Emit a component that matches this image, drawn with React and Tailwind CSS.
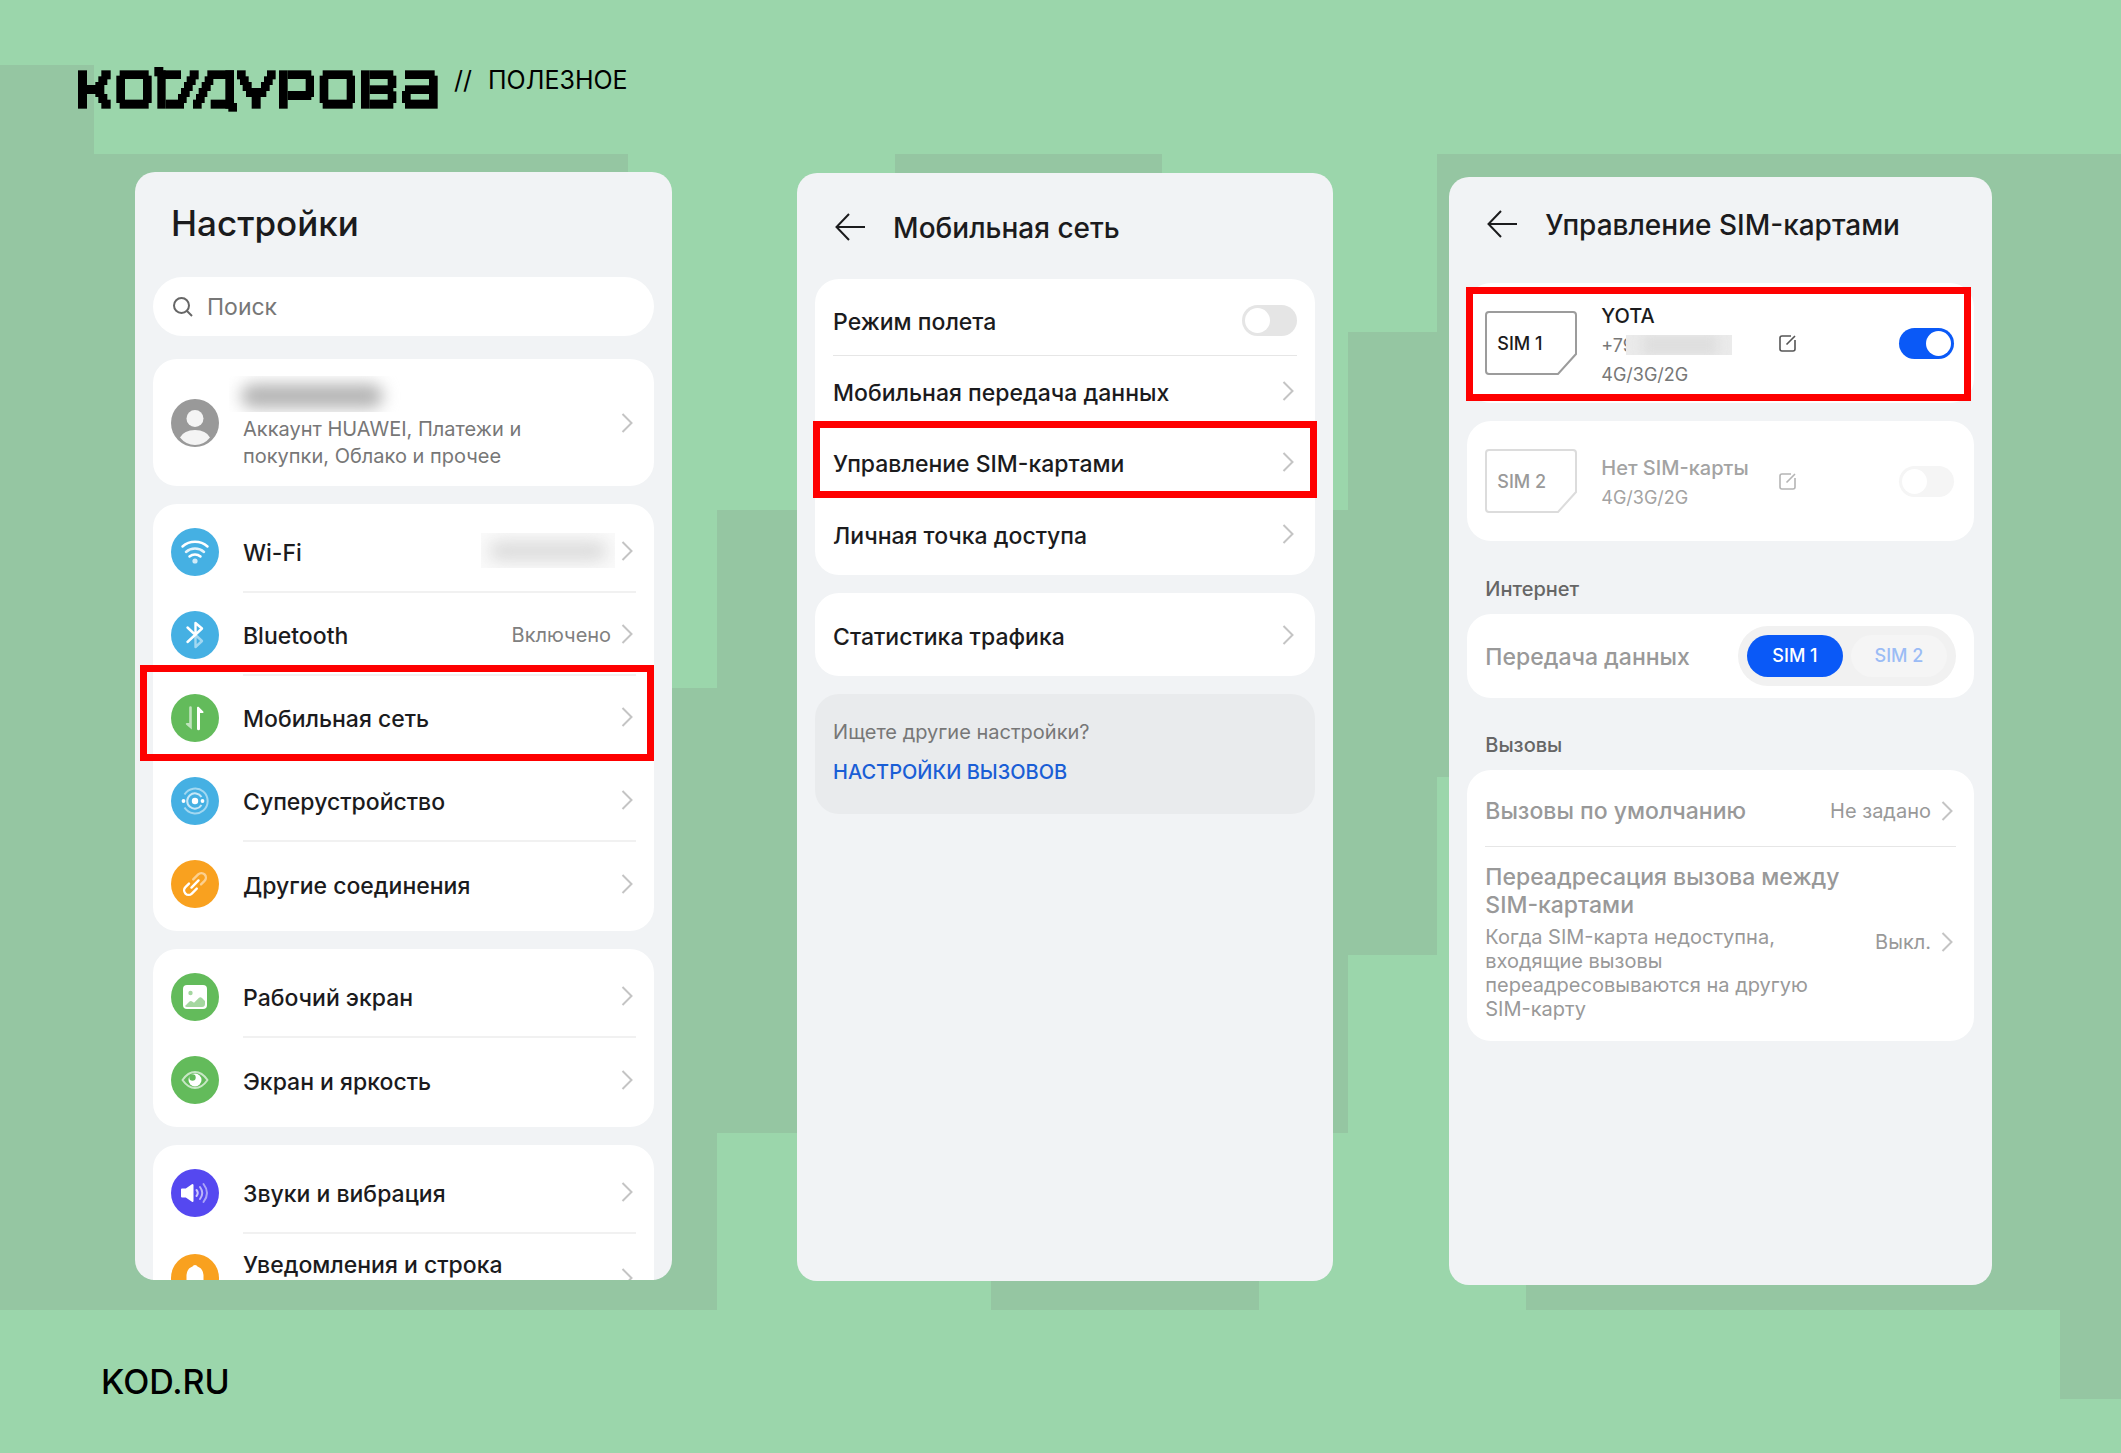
import { useState } from "react";

// Wordmark blocks: x1, y1, x2, y2
const LOGO_BLOCKS = [
    [12, 32, 39, 147], [39, 76, 73, 103], [82, 32, 110, 59], [73, 50, 100, 76], [64, 67, 91, 112], [73, 103, 100, 130], [82, 120, 110, 147],
    [137, 32, 224, 58], [127, 48, 153, 130], [207, 48, 233, 130], [137, 120, 224, 147],
    [241, 22, 268, 50], [250, 32, 275, 147], [268, 32, 321, 58], [275, 120, 330, 147], [347, 32, 374, 59], [338, 50, 365, 76], [330, 67, 356, 94], [321, 85, 347, 112], [312, 103, 338, 130],
    [357, 120, 383, 147], [366, 103, 392, 130], [374, 85, 400, 112], [383, 67, 410, 94], [392, 50, 418, 76], [400, 32, 480, 58], [454, 32, 480, 147], [410, 120, 480, 147], [463, 130, 489, 156],
    [489, 32, 515, 59], [498, 50, 524, 76], [506, 67, 533, 94], [516, 85, 577, 112], [579, 32, 605, 59], [570, 50, 596, 76], [561, 67, 587, 94], [533, 112, 560, 147],
    [615, 32, 641, 147], [641, 32, 712, 58], [695, 48, 720, 112], [641, 94, 712, 121],
    [746, 32, 836, 58], [737, 48, 763, 130], [818, 48, 843, 130], [746, 120, 836, 147],
    [861, 32, 887, 147], [887, 32, 958, 58], [941, 48, 967, 85], [887, 77, 958, 103], [941, 95, 967, 130], [887, 120, 958, 147],
    [993, 32, 1082, 58], [1065, 48, 1091, 147], [993, 77, 1065, 103], [984, 94, 1010, 130], [993, 120, 1065, 147],
];

function Logo() {
    return (
        <svg role="img" aria-label="Код Дурова" viewBox="12 22 1080 135" className="h-[45px] w-[360px]">
            {LOGO_BLOCKS.map(([x1, y1, x2, y2], i) => (
                <rect key={i} x={x1} y={y1} width={x2 - x1} height={y2 - y1} />
            ))}
        </svg>
    );
}

function Backdrop() {
    return (
        <svg
            aria-hidden="true"
            viewBox="0 0 2121 1453"
            preserveAspectRatio="none"
            shapeRendering="crispEdges"
            className="absolute inset-0 -z-10 h-full w-full"
            fill="#95c6a2"
        >
            <path d="M0 65H94V154H628V688H717V510H895V1133H717V1310H0Z" />
            <path d="M895 154H1162V510H1348V332H1437V154H2121V1399H2060V1310H1526V777H1437V955H1348V1133H1259V1310H991V1133H895Z" />
        </svg>
    );
}

const ICONS = {
    wifi: {
        color: "#45b0e3",
        art: (
            <g stroke="#fff" strokeWidth="2.5" strokeLinecap="round">
                <path d="M11.5 18.5a19 19 0 0 1 25 0" />
                <path d="M15 24a13.500 13.500 0 0 1 18 0" opacity=".85" />
                <path d="M18.500 28.500a8.500 8.500 0 0 1 11 0" />
                <circle cx="24" cy="33" r="2.600" fill="#fff" stroke="none" opacity=".75" />
            </g>
        ),
    },
    bluetooth: {
        color: "#45b0e3",
        art: (
            <g stroke="#fff" strokeWidth="2.400" strokeLinejoin="round" strokeLinecap="round">
                <path d="M24.500 25v11l6.500-6L24.500 24" opacity=".5" />
                <path d="M16.500 16.500l8 7.500M24.500 24V12l6.500 5.500L16.500 31" />
            </g>
        ),
    },
    mobile: {
        color: "#63bb5b",
        art: (
            <g fill="#fff">
                <path d="M18.200 13.500a1.300 1.300 0 0 1 2.600 0V35.500L15 30.500q-.8-1.500.8-1.500h2.400Z" opacity=".6" />
                <path d="M26 34.700a1.500 1.500 0 0 0 3 0V19h2.800q1.400-.2.500-1.500L27.500 12.800q-1.500-.6-1.500 1Z" />
            </g>
        ),
    },
    device: {
        color: "#45b0e3",
        art: (
            <g stroke="#fff" strokeWidth="2">
                <path d="M13.500 17.500a12.500 12.500 0 1 1 0 13" opacity=".5" />
                <path d="M30.500 20a7.700 7.700 0 1 0 0 8" opacity=".7" />
                <g fill="#fff" stroke="none">
                    <circle cx="24" cy="24" r="3.200" />
                    <circle cx="12.500" cy="24" r="1.900" />
                    <circle cx="31.500" cy="24" r="1.900" />
                </g>
            </g>
        ),
    },
    link: {
        color: "#f9a11f",
        art: (
            <g stroke="#fff" strokeWidth="2.400" strokeLinecap="round" transform="rotate(-45 24 24)">
                <path d="M26 19.500h7a4.500 4.500 0 0 1 0 9h-5" opacity=".5" />
                <path d="M20 19.500h-5a4.500 4.500 0 0 0 0 9h7M19 24h10" />
            </g>
        ),
    },
    picture: {
        color: "#63bb5b",
        art: (
            <>
                <rect x="12" y="12" width="24" height="24" rx="4" fill="#fff" />
                <circle cx="19.500" cy="20" r="2.200" fill="#a5d7a0" />
                <path d="M14 33l4.500-4.500q1.500-1 3 .3l1.500 1 5-5q1.500-1.200 3 .2l3 3V31q0 3-3 3H16q-1.500 0-2-1Z" fill="#a5d7a0" />
            </>
        ),
    },
    eye: {
        color: "#63bb5b",
        art: (
            <>
                <path d="M11.500 24q5.500-8 12.500-8t12.500 8q-5.500 8-12.500 8t-12.500-8Z" stroke="#fff" strokeWidth="2" strokeLinejoin="round" opacity=".65" />
                <circle cx="24" cy="24" r="6.500" fill="#fff" />
                <circle cx="21.500" cy="21.500" r="3.200" fill="#63bb5b" />
            </>
        ),
    },
    sound: {
        color: "#5548f0",
        art: (
            <g stroke="#fff" strokeWidth="2" strokeLinecap="round">
                <path d="M11 20.500h4L21.500 16v16L15 27.500h-4Z" fill="#fff" strokeLinejoin="round" />
                <path d="M25.500 21q2.500 3 0 6" opacity=".7" />
                <path d="M29 18q4.500 6 0 12" opacity=".6" />
                <path d="M32.500 15q7 9 0 18" opacity=".5" />
            </g>
        ),
    },
    bell: {
        color: "#f9a11f",
        art: <path d="M24 11q2 0 2.500 1.500Q32 14.500 32.500 21v8l3 4h-23l3-4v-8q.5-6.500 6-8.500Q22 11 24 11Z" fill="#fff" />,
    },
};

function RowIcon({ name }) {
    const { color, art } = ICONS[name];
    return (
        <svg aria-hidden="true" viewBox="0 0 48 48" fill="none" className="mr-6 size-12 shrink-0">
            <circle cx="24" cy="24" r="24" fill={color} />
            {art}
        </svg>
    );
}

function Avatar() {
    return (
        <svg aria-hidden="true" viewBox="0 0 48 48" className="mr-6 size-12 shrink-0">
            <circle cx="24" cy="24" r="24" fill="#999" />
            <circle cx="24" cy="19.500" r="8.500" fill="#f4f4f4" />
            <path d="M9 38.500Q13 31 24 31t15 7.500Q33 46 24 46T9 38.500Z" fill="#f4f4f4" />
        </svg>
    );
}

function Chevron() {
    return (
        <svg aria-hidden="true" viewBox="0 0 12 20" fill="none" stroke="#c4c4c4" strokeWidth="2" className="mr-[3px] ml-2.5 h-5 w-3 shrink-0">
            <path d="M1.500 1l9 9-9 9" />
        </svg>
    );
}

function Highlight({ className }) {
    return <span className={`pointer-events-none absolute z-10 border-[7px] border-[#fe0000] ${className}`} />;
}

function Phone({ className, children }) {
    return (
        <section className={`h-[1108px] min-w-0 overflow-hidden rounded-[20px] bg-[#f1f3f5] px-[18px] text-[#1b1b1d] ${className}`}>
            {children}
        </section>
    );
}

function Card({ className = "", children }) {
    return <div className={`rounded-[24px] bg-white px-[18px] py-1.5 ${className}`}>{children}</div>;
}

function TitleBar({ children }) {
    return (
        <div className="flex items-center gap-7 pl-5">
            <button type="button" aria-label="Назад">
                <svg viewBox="0 0 30 28" fill="none" stroke="#1b1b1d" strokeWidth="2" className="h-7 w-[30px]">
                    <path d="M14 1L1.500 14 14 27M1.500 14H30" />
                </svg>
            </button>
            <h2 className="pt-0.5 text-[28px] leading-9 font-medium">{children}</h2>
        </div>
    );
}

function SettingsRow({ icon, title, value, last, highlight, className = "h-[83px]", titleClassName = "pt-1" }) {
    return (
        <button type="button" className={`relative flex w-full items-center text-left ${className}`}>
            <RowIcon name={icon} />
            <span className={`flex h-full min-w-0 flex-1 items-center ${last ? "" : "border-b-2 border-[#f1f1f1]"}`}>
                <span className={`flex-1 text-[23px] leading-7 font-medium ${titleClassName}`}>{title}</span>
                {value}
                <Chevron />
            </span>
            {highlight && <Highlight className="-top-[11px] -right-[18px] -bottom-0.5 -left-[31px]" />}
        </button>
    );
}

function NetworkRow({ title, last, highlight, children }) {
    return (
        <div className={`relative flex h-[71px] items-center ${last ? "" : "border-b border-[#e6e6e6]"}`}>
            {children ?? (
                <button type="button" className="flex w-full items-center text-left">
                    <span className="flex-1 pt-1 text-[23px] leading-7 font-medium">{title}</span>
                    <Chevron />
                </button>
            )}
            {highlight && <Highlight className="-top-1.5 -right-5 -bottom-px -left-5" />}
        </div>
    );
}

function Switch({ id, label, checked, onChange, disabled }) {
    return (
        <input
            id={id}
            type="checkbox"
            role="switch"
            aria-label={label}
            checked={checked}
            onChange={onChange}
            disabled={disabled}
            className="flex h-[31px] w-[55px] shrink-0 appearance-none items-center rounded-full bg-[#e5e5e5] px-[3px] before:size-[25px] before:rounded-full before:bg-white checked:justify-end checked:bg-[#0a59f7] disabled:bg-[#f5f5f5]"
        />
    );
}

function SimCard({ slot, name, phone, checked, onChange, disabled }) {
    return (
        <div className="flex h-[108px] items-center pr-0.5">
            <div className={`relative flex h-16 w-[92px] shrink-0 items-center pt-0.5 pl-3 text-lg font-medium ${disabled ? "text-[#999]" : ""}`}>
                <svg
                    aria-hidden="true"
                    viewBox="0 0 92 64"
                    fill="none"
                    strokeWidth="2"
                    stroke={disabled ? "#dcdcdc" : "#9c9c9c"}
                    className="absolute inset-0"
                >
                    <path d="M4 1H88q3 0 3 3V43L73 63H4q-3 0-3-3V4q0-3 3-3Z" />
                </svg>
                SIM {slot}
            </div>
            <div className={`ml-6 flex w-[178px] flex-col pt-1 text-lg leading-[29px] ${disabled ? "text-[#a3a3a3]" : "text-[#777]"}`}>
                <span className={`text-xl leading-[29px] font-medium ${disabled ? "" : "text-[#1b1b1d]"}`}>{name}</span>
                {phone}
                <span>4G/3G/2G</span>
            </div>
            <button type="button" aria-label={`Изменить SIM ${slot}`} disabled={disabled}>
                <svg viewBox="0 0 17 17" fill="none" strokeWidth="1.600" stroke={disabled ? "#b5b5b5" : "#555"} className="size-[17px]">
                    <path d="M12 1H3Q1 1 1 3V14q0 2 2 2H14q2 0 2-2V5M7.500 9.500L16 1" />
                </svg>
            </button>
            <span className="flex-1" />
            <Switch label={`SIM ${slot}`} checked={checked} onChange={onChange} disabled={disabled} />
        </div>
    );
}

function Smudge({ className, fill }) {
    return (
        <span aria-hidden="true" className={`block overflow-hidden ${className}`}>
            <span className={`block ${fill}`} />
        </span>
    );
}

export default function App() {
    const [airplane, setAirplane] = useState(false);
    const [sim1, setSim1] = useState(true);

    return (
        <div className="relative isolate flex min-h-screen flex-col bg-[#9bd6ab] font-['Inter','Noto_Sans',sans-serif]">
            <Backdrop />

            <header className="flex items-start pt-[67px] pl-[78px]">
                <Logo />
                <p className="flex gap-4 pl-4 text-[25px] leading-[26px] text-black">
                    <span>//</span>
                    <span>ПОЛЕЗНОЕ</span>
                </p>
            </header>

            <main className="mt-[60px] flex items-start pr-[129px] pl-[135px]">
                <Phone className="flex-[537]">
                    <h1 className="mt-7 pl-[18px] text-[35px] leading-[46px] font-medium">Настройки</h1>

                    <label className="mt-[31px] flex h-[59px] items-center gap-3.5 rounded-full bg-white px-5 text-[#777]">
                        <svg aria-hidden="true" viewBox="0 0 20 20" fill="none" stroke="#666" strokeWidth="2" className="size-5 shrink-0">
                            <circle cx="8.500" cy="8.500" r="7.500" />
                            <path d="M14 14l5 5" />
                        </svg>
                        <input type="text" aria-label="Поиск" placeholder="Поиск" className="min-w-0 flex-1 pt-0.5 text-[23px] outline-none placeholder:text-[#777]" />
                    </label>

                    <Card className="mt-[23px] mb-[18px]">
                        <button type="button" className="flex h-[115px] w-full items-center text-left">
                            <Avatar />
                            <span className="flex-1 text-xl leading-[27px] text-[#777]">
                                <Smudge className="mb-1 -ml-3.5 h-9 w-[195px]" fill="mt-2 ml-3 h-6 w-[142px] rounded-full bg-[#b4b4b4] blur-[8px]" />
                                <span className="block">Аккаунт HUAWEI, Платежи и</span>
                                <span className="block">покупки, Облако и прочее</span>
                            </span>
                            <Chevron />
                        </button>
                    </Card>

                    <Card className="mb-[18px]">
                        <SettingsRow
                            icon="wifi"
                            title="Wi-Fi"
                            value={<Smudge className="-mr-1 h-[35px] w-[134px] bg-[#fafafa]" fill="mt-2 ml-2 h-5 w-[118px] rounded-full bg-[#dcdcdc] blur-[8px]" />}
                        />
                        <SettingsRow icon="bluetooth" title="Bluetooth" value={<span className="pt-0.5 text-xl text-[#808080]">Включено</span>} />
                        <SettingsRow icon="mobile" title="Мобильная сеть" highlight />
                        <SettingsRow icon="device" title="Суперустройство" />
                        <SettingsRow icon="link" title="Другие соединения" last />
                    </Card>

                    <Card className="mb-[18px]">
                        <SettingsRow icon="picture" title="Рабочий экран" />
                        <SettingsRow icon="eye" title="Экран и яркость" last />
                    </Card>

                    <Card>
                        <SettingsRow icon="sound" title="Звуки и вибрация" />
                        <SettingsRow icon="bell" title="Уведомления и строка" className="h-[88px]" titleClassName="pb-[26px]" last />
                    </Card>
                </Phone>

                <Phone className="mt-px ml-[125px] flex-[536]">
                    <div className="mt-[35px]">
                        <TitleBar>Мобильная сеть</TitleBar>
                    </div>

                    <Card className="mt-[33px] mb-[18px]">
                        <NetworkRow>
                            <label htmlFor="airplane" className="flex-1 pt-1 text-[23px] leading-7 font-medium">Режим полета</label>
                            <Switch id="airplane" label="Режим полета" checked={airplane} onChange={() => setAirplane(!airplane)} />
                        </NetworkRow>
                        <NetworkRow title="Мобильная передача данных" />
                        <NetworkRow title="Управление SIM-картами" highlight />
                        <NetworkRow title="Личная точка доступа" last />
                    </Card>

                    <Card className="mb-[18px]">
                        <NetworkRow title="Статистика трафика" last />
                    </Card>

                    <div className="flex flex-col gap-3 rounded-[24px] bg-[#e9ebed] px-[18px] pt-6 pb-7 text-xl leading-7">
                        <p className="text-[#777]">Ищете другие настройки?</p>
                        <a href="#calls" className="font-medium text-[#1a5ed6]">НАСТРОЙКИ ВЫЗОВОВ</a>
                    </div>
                </Phone>

                <Phone className="mt-[5px] ml-[116px] flex-[543]">
                    <div className="mt-7">
                        <TitleBar>Управление SIM-картами</TitleBar>
                    </div>

                    <Card className="relative mt-10 mb-[18px]">
                        <SimCard
                            slot={1}
                            name="YOTA"
                            phone={
                                <span className="flex items-center">
                                    +79
                                    <Smudge className="isolate -ml-2 h-5 w-[106px] bg-[#ebebeb]" fill="ml-4 h-5 w-[76px] bg-[#dedede] blur-[6px]" />
                                </span>
                            }
                            checked={sim1}
                            onChange={() => setSim1(!sim1)}
                        />
                        <Highlight className="top-1 right-[3px] bottom-0.5 -left-px" />
                    </Card>

                    <Card>
                        <SimCard slot={2} name="Нет SIM-карты" checked={false} disabled />
                    </Card>

                    <h3 className="mt-[34px] mb-[11px] pl-[18px] text-xl leading-7 font-medium text-[#666]">Интернет</h3>
                    <Card className="flex h-[84px] items-center justify-between">
                        <span className="pt-0.5 text-[23px] font-medium text-[#999]">Передача данных</span>
                        <div role="group" aria-label="Передача данных" className="flex h-[60px] items-center gap-2 rounded-full bg-[#f1f1f1] px-[9px] text-lg font-medium">
                            <button type="button" aria-pressed="true" className="h-[42px] w-24 rounded-full bg-[#0a59f7] text-white">SIM 1</button>
                            <button type="button" aria-pressed="false" className="h-[42px] w-24 rounded-full bg-[#f5f5f5] text-[#9bbcf5]">SIM 2</button>
                        </div>
                    </Card>

                    <h3 className="mt-[33px] mb-[11px] pl-[18px] text-xl leading-7 font-medium text-[#666]">Вызовы</h3>
                    <Card className="text-[#999]">
                        <button type="button" className="flex h-[71px] w-full items-center border-b border-[#e6e6e6] text-left">
                            <span className="flex-1 text-[23px] font-medium">Вызовы по умолчанию</span>
                            <span className="text-xl">Не задано</span>
                            <Chevron />
                        </button>
                        <button type="button" className="flex w-full items-center pt-4 pb-3.5 text-left">
                            <span className="flex-1">
                                <span className="block text-[23px] leading-7 font-medium">Переадресация вызова между<br />SIM-картами</span>
                                <span className="mt-1.5 block text-xl leading-6">
                                    Когда SIM-карта недоступна,<br />входящие вызовы<br />переадресовываются на другую<br />SIM-карту
                                </span>
                            </span>
                            <span className="text-xl">Выкл.</span>
                            <Chevron />
                        </button>
                    </Card>
                </Phone>
            </main>

            <footer className="mt-[75px] pb-12 pl-[101px] text-[34px] leading-[44px] font-medium text-black">KOD.RU</footer>
        </div>
    );
}
